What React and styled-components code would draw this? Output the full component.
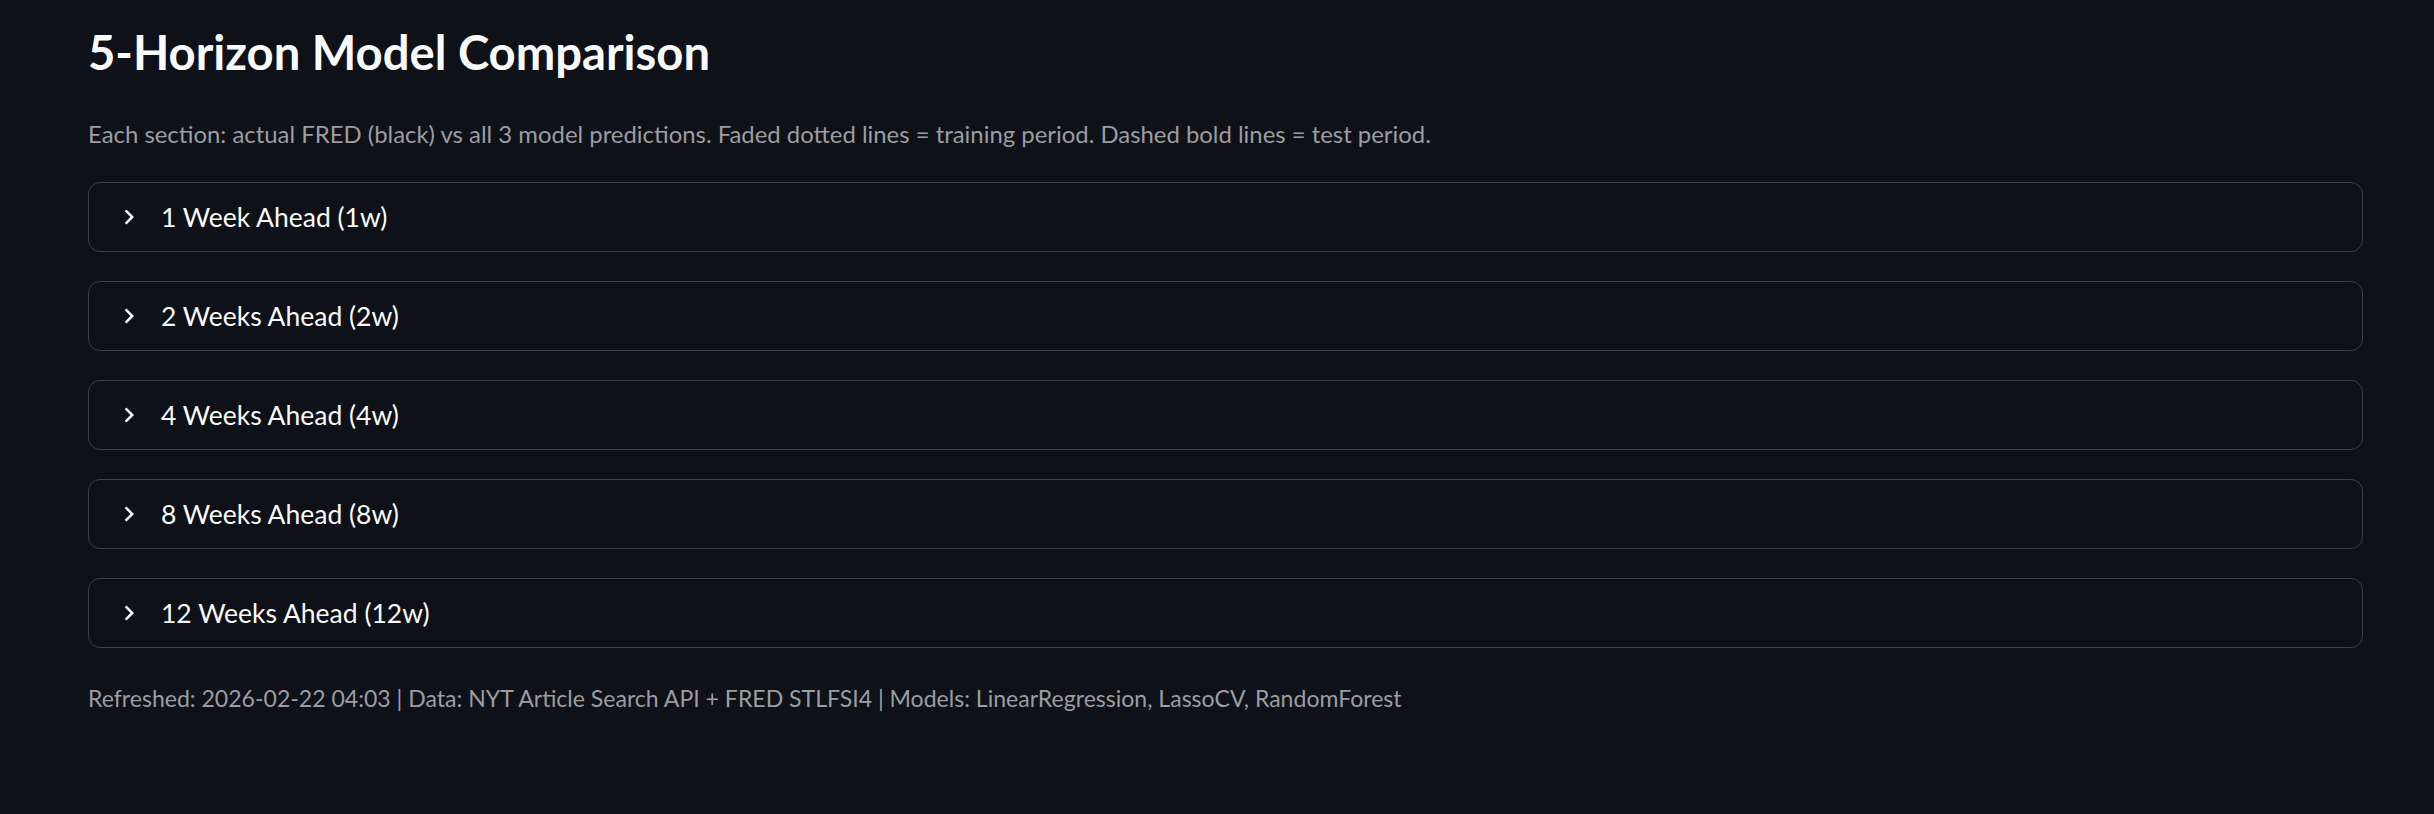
import React from 'react';
import styled, { createGlobalStyle } from 'styled-components';

const GlobalStyle = createGlobalStyle`
  html, body {
    margin: 0;
    padding: 0;
    background-color: #0e1117;
  }
  * {
    box-sizing: border-box;
  }
`;

const Page = styled.main`
  min-height: 814px;
  background-color: #0e1117;
  color: #fafafa;
  font-family: 'Lato', 'Noto Sans', sans-serif;
  padding: 24px 71px 40px 88px;
  display: flex;
  flex-direction: column;
`;

const Title = styled.h3`
  margin: 0;
  font-size: 47.2px;
  font-weight: 700;
  line-height: 56px;
  color: #fafafa;
`;

const Caption = styled.p`
  margin: ${({ top }) => top || 0}px 0 0 0;
  font-size: ${({ size }) => size || 23.5}px;
  line-height: 32px;
  color: #9c9da1;
`;

const ExpanderList = styled.div`
  display: flex;
  flex-direction: column;
  gap: 29px;
  margin-top: 32px;
`;

const Expander = styled.details`
  border: 1px solid #3d4045;
  border-radius: 12px;
  height: 70px;
`;

const Summary = styled.summary`
  list-style: none;
  display: flex;
  align-items: center;
  height: 68px;
  padding-left: 25px;
  gap: 17px;
  cursor: pointer;
  font-size: 26.5px;
  color: #fafafa;

  &::-webkit-details-marker {
    display: none;
  }
`;

const Chevron = () => (
  <svg width="30" height="30" viewBox="0 0 24 24" fill="#fafafa">
    <path d="M10 6 8.59 7.41 13.17 12l-4.58 4.59L10 18l6-6z" />
  </svg>
);

const horizons = [
  '1 Week Ahead (1w)',
  '2 Weeks Ahead (2w)',
  '4 Weeks Ahead (4w)',
  '8 Weeks Ahead (8w)',
  '12 Weeks Ahead (12w)',
];

export default function App() {
  return (
    <>
      <GlobalStyle />
      <Page>
        <Title>5-Horizon Model Comparison</Title>
        <Caption top={38} size={23.9}>
          Each section: actual FRED (black) vs all 3 model predictions. Faded dotted lines = training period. Dashed bold lines = test period.
        </Caption>
        <ExpanderList>
          {horizons.map((label) => (
            <Expander key={label}>
              <Summary>
                <Chevron />
                <span>{label}</span>
              </Summary>
            </Expander>
          ))}
        </ExpanderList>
        <Caption top={34} size={23.05}>
          Refreshed: 2026-02-22 04:03 | Data: NYT Article Search API + FRED STLFSI4 | Models: LinearRegression, LassoCV, RandomForest
        </Caption>
      </Page>
    </>
  );
}
